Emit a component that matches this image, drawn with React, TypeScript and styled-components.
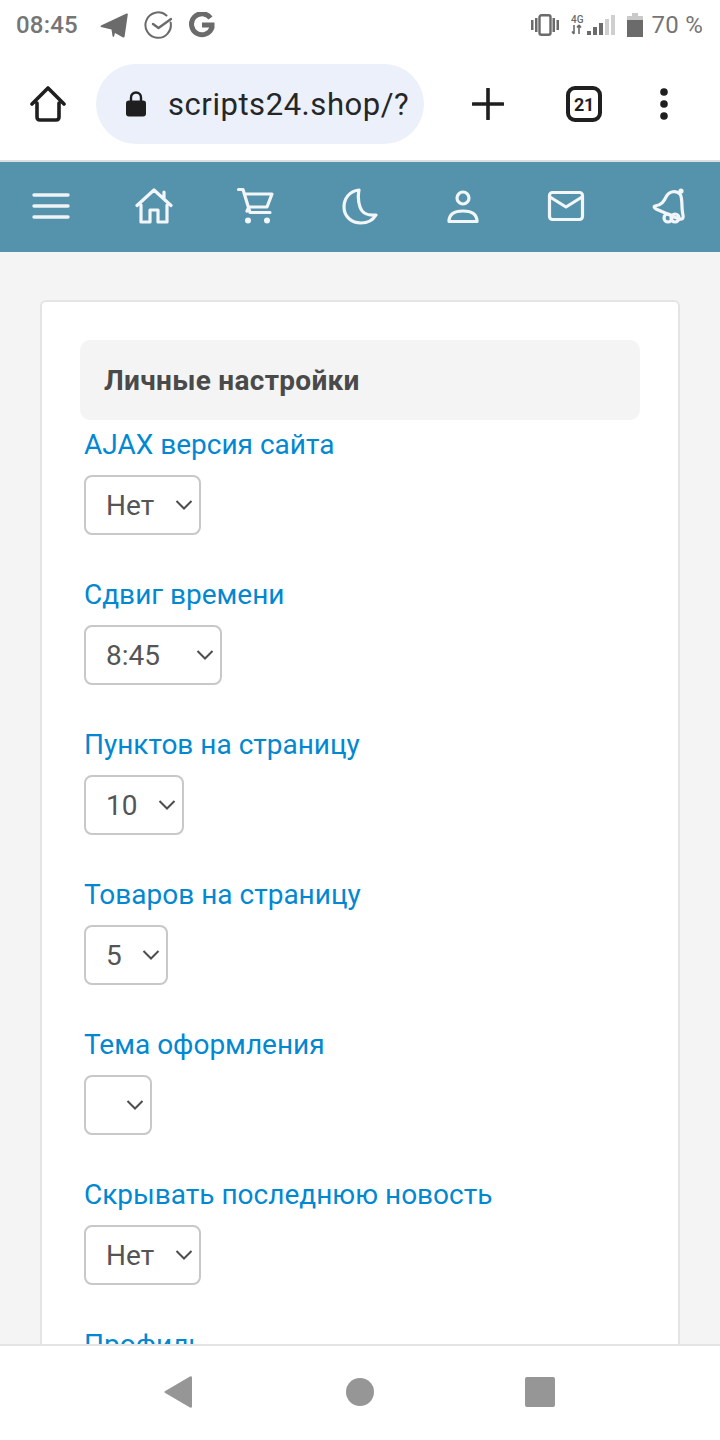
import React from 'react';
import styled, { createGlobalStyle } from 'styled-components';

const Global = createGlobalStyle`
  html, body { margin: 0; padding: 0; height: 100%; overflow: hidden; background: #fff; }
  * { box-sizing: border-box; }
`;
const Screen = styled.div`
  width: 720px; height: 1440px; display: flex; flex-direction: column; overflow: hidden;
  font-family: Roboto, "Liberation Sans", sans-serif; background: #fff;
`;
const StatusBar = styled.div`
  height: 48px; flex: none; display: flex; align-items: center; justify-content: space-between;
  padding: 2px 17px 0 16px; color: #6f6f6f;
`;
const StatusGroup = styled.div`display: flex; align-items: center;`;
const StatusTime = styled.span`font-size: 24px; font-weight: 500; letter-spacing: 0.2px; margin-right: 22px; color: #767676;`;
const StatusPct = styled.span`font-size: 24px; font-weight: 400; letter-spacing: 0.25px; margin-left: 8px; color: #757575;`;
const Toolbar = styled.div`
  height: 112px; flex: none; display: flex; align-items: center; padding: 0 0 0 30px; background: #fff;
`;
const ToolIconSlot = styled.div<{ $w: number; $ml?: number }>`
  width: ${p => p.$w}px; margin-left: ${p => p.$ml ?? 0}px; flex: none; display: flex; align-items: center; justify-content: center;
`;
const UrlPill = styled.div`
  margin-left: 30px; width: 328px; height: 80px; border-radius: 40px; background: #ebf0fa; flex: none;
  display: flex; align-items: center; padding-left: 30px; overflow: hidden;
`;
const UrlText = styled.span`
  font-size: 31px; color: #252628; margin-left: 22px; letter-spacing: 0.55px; white-space: nowrap;
`;
const TabCount = styled.div`
  width: 36px; height: 36px; border: 4px solid #1f1f1f; border-radius: 9px; display: flex; align-items: center; justify-content: center;
  font-size: 18px; font-weight: 700; color: #1f1f1f; letter-spacing: -0.3px;
`;
const NavBar = styled.div`
  height: 92px; flex: none; border-top: 2px solid #dcdfdf; background: #5593ad; display: grid;
  grid-template-columns: repeat(7, 103px); align-items: center; justify-items: center; padding-bottom: 2px; margin-left: -1px;
`;
const NavIcon = styled.svg`
  display: block; overflow: visible; filter: blur(0.5px);
`;
const Page = styled.div`
  flex: 1; min-height: 0; overflow: hidden; background: #f4f4f4; padding: 48px 40px 0;
`;
const Card = styled.div`
  background: #fff; border: 2px solid #e4e4e4; border-radius: 6px; padding: 38px 38px 40px;
`;
const Heading = styled.div`
  height: 80px; border-radius: 10px; background: #f4f4f4; display: flex; align-items: center; padding: 1px 0 0 24px;
  font-size: 28px; letter-spacing: 0.3px; font-weight: 700; color: #4a4a4a; font-family: Roboto, sans-serif;
`;
const Field = styled.div`padding-left: 4px; height: 150px; display: flex; flex-direction: column; align-items: flex-start;`;
const Label = styled.div`
  font-size: 28px; line-height: 50px; height: 48px; color: #0288d1; white-space: nowrap; margin-bottom: 7px; font-family: Roboto, sans-serif;
`;
const SelectWrap = styled.div<{ $w: number }>`
  position: relative; width: ${p => p.$w}px; height: 60px;
`;
const Select = styled.select`
  appearance: none; -webkit-appearance: none; width: 100%; height: 100%; border: 2px solid #c8c8c8; border-radius: 8px;
  background: #fff; color: #555; font-size: 28px; font-family: Roboto, sans-serif; padding: 0 0 0 20px; outline: none; opacity: 1;
`;
const Chevron = styled.svg`
  position: absolute; right: 8px; top: 24px; pointer-events: none;
`;
const BottomBar = styled.div`
  height: 96px; flex: none; background: #fff; border-top: 2px solid #e4e4e4; display: flex; align-items: center; justify-content: center;
  gap: 151px; padding: 0 2px 2px 0;
`;
const BackShape = styled.svg`display: block; margin-right: 3px;`;

const fields = [
  { label: 'AJAX версия сайта', value: 'Нет', w: 117 },
  { label: 'Сдвиг времени', value: '8:45', w: 138 },
  { label: 'Пунктов на страницу', value: '10', w: 100 },
  { label: 'Товаров на страницу', value: '5', w: 84 },
  { label: 'Тема оформления', value: '', w: 68 },
  { label: 'Скрывать последнюю новость', value: 'Нет', w: 117 },
  { label: 'Профиль', value: 'Нет', w: 117 },
];

const stroke = { fill: 'none', stroke: '#f2f6f8', strokeWidth: 3.2, strokeLinecap: 'round', strokeLinejoin: 'round' } as const;

export default function App() {
  return (
    <Screen>
      <Global />
      <StatusBar>
        <StatusGroup>
          <StatusTime>08:45</StatusTime>
          <svg width="28" height="25" viewBox="0 0 28 25" style={{ marginRight: 16 }}>
            <path d="M1 12.5 L26.5 0.6 Q28 0 27.8 1.6 L24.6 23.4 Q24.2 25 22.6 24.2 L15 20 L14 23.5 Q13 24.5 12.5 23 L11.5 16.5 L1 14 Q0 13.2 1 12.5 Z" fill="#6b6b6b" />
          </svg>
          <svg width="28" height="28" viewBox="0 0 28 28" style={{ marginRight: 17 }}>
            <path d="M22.5 4.5 A12.7 12.7 0 1 0 26.6 11.5" fill="none" stroke="#6b6b6b" strokeWidth="2" strokeLinecap="round" />
            <path d="M9 13 L14.5 17 L27 8" fill="none" stroke="#6b6b6b" strokeWidth="2.4" strokeLinecap="round" strokeLinejoin="round" />
          </svg>
          <svg width="26" height="26" viewBox="0 0 26 26">
            <path d="M21.5 6 A10.5 10.5 0 1 0 23 15.5 L23 13 L13 13" fill="none" stroke="#6b6b6b" strokeWidth="5" />
          </svg>
        </StatusGroup>
        <StatusGroup>
          <svg width="28" height="22" viewBox="0 0 28 22" style={{ marginRight: 12 }}>
            <rect x="8.5" y="1.2" width="11" height="19.6" rx="2" fill="none" stroke="#6b6b6b" strokeWidth="2.4" />
            <rect x="0" y="6" width="2.5" height="10" fill="#6b6b6b" />
            <rect x="4" y="4" width="2.5" height="14" fill="#6b6b6b" />
            <rect x="21.5" y="4" width="2.5" height="14" fill="#6b6b6b" />
            <rect x="25.5" y="6" width="2.5" height="10" fill="#6b6b6b" />
          </svg>
          <svg width="44" height="22" viewBox="0 0 44 22" style={{ marginRight: 12 }}>
            <path d="M3 11 L3 20 M3 20 L1 17.5 M8 11 L8 20 M8 11 L6 13.5 M8 11 L10 13.5" fill="none" stroke="#6b6b6b" strokeWidth="1.6" />
            <text x="0" y="9" fontSize="10" fontWeight="500" fontFamily="Roboto" fill="#6b6b6b">4G</text>
            <rect x="16" y="17" width="4" height="4" fill="#6b6b6b" />
            <rect x="22" y="13" width="4" height="8" fill="#6b6b6b" />
            <rect x="28" y="9" width="4" height="12" fill="#6b6b6b" />
            <rect x="34" y="5" width="4" height="16" fill="#cfcfcf" />
            <rect x="40" y="1" width="4" height="20" fill="#cfcfcf" />
          </svg>
          <svg width="16" height="24" viewBox="0 0 16 24">
            <path d="M5 0 H11 V3 H16 V7 H0 V3 H5 Z" fill="#c9c9c9" />
            <rect x="0" y="7" width="16" height="17" fill="#6b6b6b" />
          </svg>
          <StatusPct>70 %</StatusPct>
        </StatusGroup>
      </StatusBar>
      <Toolbar>
        <ToolIconSlot $w={36}>
          <svg width="36" height="36" viewBox="0 0 36 36">
            <path d="M7 17 V31 Q7 34 10 34 H26 Q29 34 29 31 V17 M2 18 L18 2 L34 18" fill="none" stroke="#1f1f1f" strokeWidth="3.6" strokeLinejoin="round" strokeLinecap="round" />
          </svg>
        </ToolIconSlot>
        <UrlPill>
          <svg width="20" height="26" viewBox="0 0 20 26" style={{ flex: 'none' }}>
            <path d="M5 11 V6.5 A5 5 0 0 1 15 6.5 V11" fill="none" stroke="#1f1f1f" strokeWidth="2.4" />
            <rect x="0" y="9.5" width="20" height="16" rx="3" fill="#1f1f1f" />
          </svg>
          <UrlText>scripts24.shop/?</UrlText>
        </UrlPill>
        <ToolIconSlot $w={32} $ml={48}>
          <svg width="32" height="32" viewBox="0 0 32 32">
            <path d="M16 1 V31 M1 16 H31" stroke="#1f1f1f" strokeWidth="3.6" strokeLinecap="round" />
          </svg>
        </ToolIconSlot>
        <ToolIconSlot $w={36} $ml={62}><TabCount>21</TabCount></ToolIconSlot>
        <ToolIconSlot $w={8} $ml={58}>
          <svg width="8" height="32" viewBox="0 0 8 32">
            <circle cx="4" cy="4" r="3.8" fill="#1f1f1f" />
            <circle cx="4" cy="16" r="3.8" fill="#1f1f1f" />
            <circle cx="4" cy="28" r="3.8" fill="#1f1f1f" />
          </svg>
        </ToolIconSlot>
      </Toolbar>
      <NavBar>
        <NavIcon width="38" height="26" viewBox="0 0 38 26">
          <path d="M2 2 H36 M2 13 H36 M2 24 H36" fill="none" stroke="#eef3f5" strokeWidth="3.4" strokeLinecap="round" />
        </NavIcon>
        <NavIcon width="38" height="36" viewBox="0 0 38 36">
          <path {...stroke} d="M2 17.5 L19 2 L36 17.5 M6 17 V34 H15 V22 H23 V34 H32 V17 M29 10 V4" />
        </NavIcon>
        <NavIcon width="36" height="36" viewBox="2 0 36 36">
          <path {...stroke} d="M1.5 1.5 H6 L13 24.5 H33 M8 6 H35 L30 19 H12 L10 23" />
          <circle cx="11" cy="32.5" r="3" fill="#f2f6f8" />
          <circle cx="30" cy="32.5" r="3" fill="#f2f6f8" />
        </NavIcon>
        <NavIcon width="36" height="38" viewBox="0 0 36 38">
          <path {...stroke} d="M17 3 C7 4 2 12 2 20 C2 30 10 36 19 36 C26 36 31 33 34 28 C26 29 20 26 18 20 C16 14 16 8 17 3 Z" />
        </NavIcon>
        <NavIcon width="32" height="34" viewBox="0 0 32 34">
          <circle {...stroke} cx="16" cy="9" r="6" />
          <path {...stroke} d="M2 32.5 C2 25 8 22 16 22 C24 22 30 25 30 32.5 Z" />
        </NavIcon>
        <NavIcon width="36" height="30" viewBox="0 0 36 30">
          <rect {...stroke} x="1.5" y="1.5" width="33" height="27" rx="3" />
          <path {...stroke} d="M2 6 L18 16 L34 6" />
        </NavIcon>
        <NavIcon width="34" height="38" viewBox="0 0 34 38">
          <path {...stroke} d="M3 19 C10 18 12 14 14 10 C17 4 24 3 28 7 C31 11 29 20 31 28 Q32 33 27 32 L4 22 Q1 20 3 19 Z" />
          <circle cx="29" cy="4" r="2.6" fill="#f2f6f8" />
          <circle {...stroke} cx="16" cy="31" r="4" />
          <circle {...stroke} cx="23" cy="31" r="4" />
        </NavIcon>
      </NavBar>
      <Page>
        <Card>
          <Heading>Личные настройки</Heading>
          {fields.map(f => (
            <Field key={f.label}>
              <Label>{f.label}</Label>
              <SelectWrap $w={f.w}>
                <Select defaultValue={f.value}>
                  <option value={f.value}>{f.value}</option>
                </Select>
                <Chevron width="18" height="12" viewBox="0 0 18 12">
                  <path d="M1.5 2 L9 9.5 L16.5 2" fill="none" stroke="#4d4d4d" strokeWidth="2" />
                </Chevron>
              </SelectWrap>
            </Field>
          ))}
        </Card>
      </Page>
      <BottomBar>
        <BackShape width="28" height="32" viewBox="0 0 28 32">
          <path d="M0.8 16.8 Q0 16 0.8 15.2 L26 0.4 Q28 0 28 1.6 V30.4 Q28 32 26 31.6 Z" fill="#969696" />
        </BackShape>
        <svg width="28" height="28" viewBox="0 0 28 28"><circle cx="14" cy="14" r="14" fill="#969696" /></svg>
        <svg width="30" height="30" viewBox="0 0 30 30"><rect width="30" height="30" rx="2" fill="#969696" /></svg>
      </BottomBar>
    </Screen>
  );
}
